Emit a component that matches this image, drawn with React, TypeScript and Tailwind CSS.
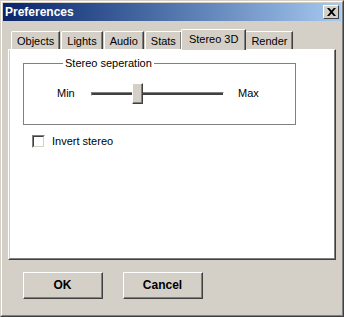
import React, { useState } from 'react';

const tabs = ['Objects', 'Lights', 'Audio', 'Stats', 'Stereo 3D', 'Render'];

const Tab: React.FC<{ label: string; active: boolean; onClick: () => void }> = ({ label, active, onClick }) => (
  <div
    onClick={onClick}
    className={
      'flex items-start border-t border-l border-white border-r border-r-[#404040] rounded-tl-[2px] bg-[#d4d0c8] cursor-default shadow-[inset_-1px_0_0_#808080] leading-[13px] ' +
      (active ? 'relative z-10 h-[21px] mx-[-2px] px-[7px] pt-[3px] -mb-px' : 'h-[18px] px-[5px] pt-[3px]')
    }
  >
    {label}
  </div>
);

const Button: React.FC<{ label: string }> = ({ label }) => (
  <button className="w-[80px] h-[27px] border-t border-l border-white border-r border-b border-r-[#404040] border-b-[#404040] bg-[#d4d0c8]">
    <div className="h-full border-r border-b border-[#808080] flex items-center justify-center font-bold text-[12px]">
      {label}
    </div>
  </button>
);

export default function App() {
  const [active, setActive] = useState(4);
  const [inverted, setInverted] = useState(false);

  return (
    <div
      className="w-[344px] h-[317px] bg-[#d4d0c8] border border-t-[#d4d0c8] border-l-[#d4d0c8] border-r-[#404040] border-b-[#404040] text-[11px] text-black"
      style={{ fontFamily: '"Liberation Sans", Arial, sans-serif' }}
    >
      <div className="h-full border border-t-white border-l-white border-r-[#808080] border-b-[#808080] p-px flex flex-col">
        {/* title bar */}
        <div className="h-[18px] flex items-center justify-between pl-[2px] pr-[2px] bg-gradient-to-r from-[#0a246a] to-[#a6caf0]">
          <span className="text-white font-bold text-[12px] leading-none">Preferences</span>
          <div className="w-[16px] h-[14px] bg-[#d4d0c8] border-t border-l border-white border-r border-b border-r-[#404040] border-b-[#404040] flex items-center justify-center">
            <svg width="9" height="8" viewBox="0 0 9 8">
              <path d="M0 0h2.2l2.3 2.6L6.8 0H9L5.7 4 9 8H6.8L4.5 5.4 2.2 8H0l3.3-4z" fill="#000" />
            </svg>
          </div>
        </div>

        {/* tabs + page */}
        <div className="mt-[8px] mx-[5px] flex flex-col">
          <div className="flex items-end pl-[3px] gap-[1px]">
            {tabs.map((t, i) => (
              <Tab key={t} label={t} active={i === active} onClick={() => setActive(i)} />
            ))}
          </div>
          <div className="h-[211px] bg-white border-t border-l border-white border-r border-b border-r-[#404040] border-b-[#404040]">
            <div className="h-full border-l border-[#d4d0c8] border-r border-b border-r-[#808080] border-b-[#808080] pl-[13px] pr-[38px] pt-[7px]">
              <fieldset className="border border-[#808080] h-[68px] pl-[33px]">
                <legend className="ml-[6px] px-[2px] leading-[12px]">Stereo seperation</legend>
                <div className="flex items-center mt-[14px]">
                  <span className="w-[34px]">Min</span>
                  <div className="relative w-[133px] h-[21px] flex items-center">
                    <div className="w-full h-[4px] border-t border-l border-[#808080] border-r border-b border-r-white border-b-white bg-[#404040]" />
                    <div className="absolute left-[41px] top-0 w-[11px] h-[21px] bg-[#d4d0c8] border-t border-l border-white border-r border-b border-r-[#404040] border-b-[#404040]">
                      <div className="h-full border-r border-b border-[#808080]" />
                    </div>
                  </div>
                  <span className="ml-[14px]">Max</span>
                </div>
              </fieldset>
              <label className="flex items-center mt-[8px] ml-[9px] gap-[7px]" onClick={() => setInverted(!inverted)}>
                <span className="w-[13px] h-[13px] border-t border-l border-[#808080] border-r border-b border-r-white border-b-white">
                  <span className="block w-full h-full border-t border-l border-[#404040] border-r border-b border-r-[#d4d0c8] border-b-[#d4d0c8] bg-white" />
                </span>
                <span>Invert stereo</span>
              </label>
            </div>
          </div>
        </div>

        {/* buttons */}
        <div className="flex gap-[20px] pl-[20px] mt-[12px]">
          <Button label="OK" />
          <Button label="Cancel" />
        </div>
      </div>
    </div>
  );
}
